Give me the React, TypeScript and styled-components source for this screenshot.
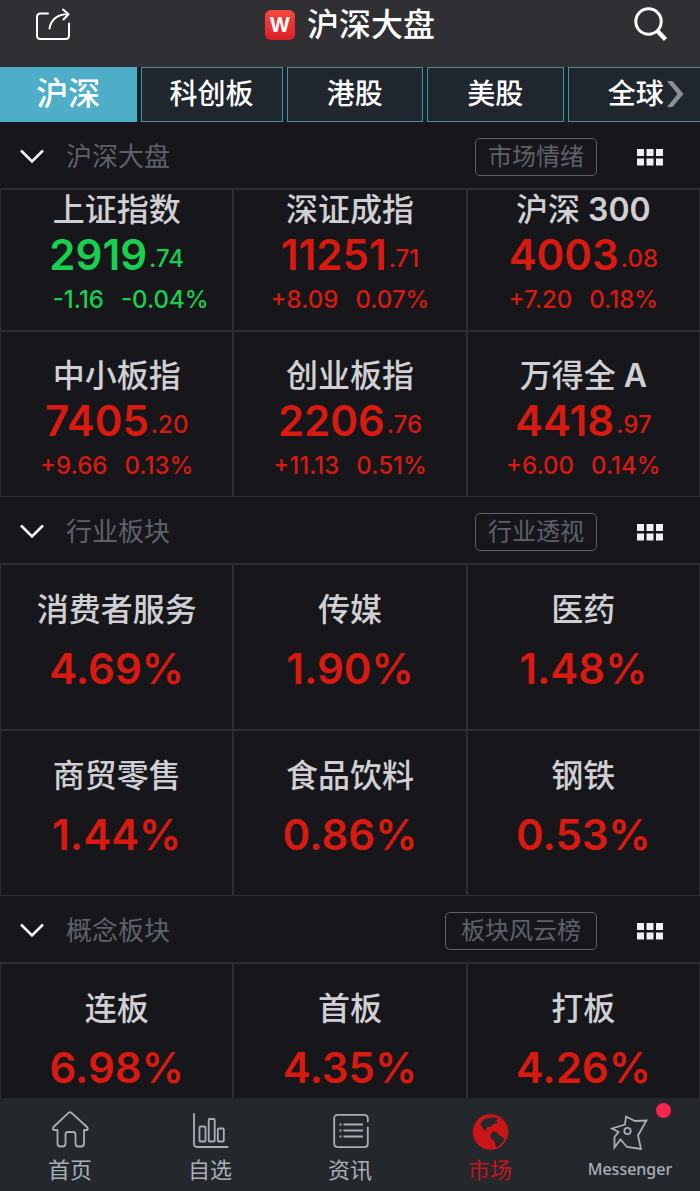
import React from 'react';
import styled, { createGlobalStyle } from 'styled-components';

const colors = {
  page: '#17171b',
  header: '#302f34',
  nav: '#24272c',
  tab: '#20262d',
  tabStrip: '#14222a',
  tabBorder: '#4f8d98',
  accent: '#4eaec8',
  line: '#2b2e33',
  muted: '#5d626a',
  name: '#d0d0d4',
  up: '#d81a10',
  down: '#18cf50',
  navText: '#a9afb9',
};

const GlobalStyle = createGlobalStyle`
  * { box-sizing: border-box; }
  body {
    margin: 0;
    background: ${colors.page};
    font-family: Inter, "Noto Sans CJK SC", sans-serif;
    color: #fff;
  }
  button { font: inherit; color: inherit; cursor: pointer; }
`;

const Shell = styled.div`
  display: flex;
  flex-direction: column;
  height: 100vh;
`;

const Header = styled.header`
  display: grid;
  grid-template-columns: 1fr auto 1fr;
  align-items: center;
  flex: none;
  height: 67px;
  padding: 0 32px 18px;
  background: ${colors.header};
`;

const IconButton = styled.button<{ $end?: boolean }>`
  display: flex;
  justify-self: ${(p) => (p.$end ? 'end' : 'start')};
  padding: 0;
  border: 0;
  background: none;
`;

const Title = styled.h1`
  display: flex;
  align-items: center;
  gap: 12px;
  margin: 0;
  font-size: 32px;
  line-height: 48px;
  font-weight: 500;
`;

const Logo = styled.span`
  display: flex;
  align-items: center;
  justify-content: center;
  width: 30px;
  height: 30px;
  border-radius: 6px;
  background: linear-gradient(#f5473c, #dc1f26);
  font: 700 20px/30px Inter, sans-serif;
`;

const TabStrip = styled.nav`
  position: relative;
  flex: none;
  overflow: hidden;
  background: ${colors.tabStrip};
`;

const TabList = styled.div`
  display: flex;
  gap: 4px;
`;

const Tab = styled.button<{ $active?: boolean }>`
  flex: 0 0 19.5%;
  min-width: fit-content;
  height: 55px;
  padding: 0 28px 2px;
  border: 1px solid ${(p) => (p.$active ? colors.accent : colors.tabBorder)};
  background: ${(p) => (p.$active ? colors.accent : colors.tab)};
  font-size: ${(p) => (p.$active ? 32 : 28)}px;
  font-weight: 500;
  line-height: 40px;
`;

const MoreTabs = styled.span`
  position: absolute;
  top: 13px;
  right: 16px;
  display: flex;
`;

const Content = styled.main`
  flex: 1;
  min-height: 0;
  overflow-y: auto;
  scrollbar-width: none;
`;

const SectionHeader = styled.div`
  display: flex;
  align-items: center;
  height: 66px;
  padding: 4px 37px 0 20px;
`;

const SectionTitle = styled.h2`
  flex: 1;
  margin: 0 0 0 22px;
  font-size: 26px;
  line-height: 36px;
  font-weight: 400;
  color: ${colors.muted};
`;

const LinkButton = styled.button<{ $wide?: boolean }>`
  height: 38px;
  margin-right: 40px;
  padding: 0 ${(p) => (p.$wide ? 15 : 12)}px;
  border: 1px solid ${colors.muted};
  border-radius: 5px;
  background: none;
  font-size: 24px;
  line-height: 32px;
  font-weight: 400;
  color: ${colors.muted};
`;

const Grid = styled.div`
  display: grid;
  grid-template-columns: repeat(3, 1fr);
  gap: 2px 2px;
  padding: 2px 1px 1px;
  background: ${colors.line};
`;

const Cell = styled.div<{ $cut?: boolean; $roomy?: boolean }>`
  display: flex;
  flex-direction: column;
  align-items: center;
  height: ${(p) => (p.$cut ? 140 : 164)}px;
  padding-top: ${(p) => (p.$cut ? 1 : p.$roomy ? 26 : 25)}px;
  background: ${colors.page};
`;

const Name = styled.div`
  font-size: 32px;
  line-height: 38px;
  font-weight: 500;
  color: ${colors.name};
`;

const Latin = styled.span`
  font-weight: 600;
`;

const Price = styled.div<{ $down?: boolean }>`
  display: flex;
  align-items: flex-end;
  gap: 2px;
  font-size: 42px;
  line-height: 52px;
  font-weight: 600;
  color: ${(p) => (p.$down ? colors.down : colors.up)};
`;

const Fraction = styled.span`
  font-size: 24px;
  line-height: 44px;
  font-weight: 500;
`;

const Change = styled.div<{ $down?: boolean }>`
  display: flex;
  gap: 17px;
  padding-left: ${(p) => (p.$down ? 28 : 0)}px;
  font-size: 24px;
  line-height: 38px;
  font-weight: 500;
  color: ${(p) => (p.$down ? colors.down : colors.up)};
`;

const Percent = styled.div`
  margin-top: 14px;
  font-size: 42px;
  line-height: 52px;
  font-weight: 600;
  color: ${colors.up};
`;

const BottomNav = styled.nav`
  display: grid;
  grid-template-columns: repeat(5, 1fr);
  flex: none;
  height: 93px;
  background: ${colors.nav};
`;

const NavLink = styled.a<{ $active?: boolean }>`
  position: relative;
  display: flex;
  flex-direction: column;
  align-items: center;
  gap: 3px;
  padding-top: 12px;
  color: ${(p) => (p.$active ? '#c4161a' : colors.navText)};
  text-decoration: none;
`;

const NavLabel = styled.span<{ $latin?: boolean }>`
  font-family: "Noto Sans", "Noto Sans CJK SC", sans-serif;
  font-size: ${(p) => (p.$latin ? 16 : 22)}px;
  line-height: 32px;
  font-weight: ${(p) => (p.$latin ? 500 : 400)};
`;

const Badge = styled.span`
  position: absolute;
  top: 5px;
  right: 29px;
  width: 15px;
  height: 15px;
  border-radius: 50%;
  background: #f9244f;
`;

const ShareIcon = () => (
  <svg width="42" height="34" viewBox="0 0 42 34" fill="none" stroke="#fff" strokeWidth="2" strokeLinecap="round" strokeLinejoin="round" aria-hidden="true">
    <path d="M16 5.500H8.500Q5 5.500 5 9V27.500Q5 31 8.500 31H33.500Q37 31 37 27.500V15.500" />
    <path d="M17.500 20.500C19 12 25 6.500 36 6M31 1.500L36.500 6.200L31.500 11.500" />
  </svg>
);

const SearchIcon = () => (
  <svg width="36" height="38" viewBox="0 0 36 38" fill="none" stroke="#fff" aria-hidden="true">
    <circle cx="16.500" cy="15.500" r="12.700" strokeWidth="3" />
    <path d="M25 24.500L33.500 33.500" strokeWidth="4.500" />
  </svg>
);

const ChevronDown = () => (
  <svg width="24" height="16" viewBox="0 0 24 16" fill="none" stroke="#f1f1f4" strokeWidth="2.600" aria-hidden="true">
    <path d="M1 1.500L12 12.500L23 1.500" />
  </svg>
);

const DotsIcon = () => (
  <svg width="26" height="17" viewBox="0 0 26 17" fill="#efeff4" aria-hidden="true">
    {[0, 9.500, 19].map((x) =>
      [0, 9.500].map((y) => <rect key={`${x}-${y}`} x={x} y={y} width="7" height="7" />),
    )}
  </svg>
);

const ArrowRight = () => (
  <svg width="18" height="28" viewBox="0 0 18 28" fill="#8b9097" aria-hidden="true">
    <path d="M1 1H6.500L17.500 14L6.500 27H1L11.500 14Z" />
  </svg>
);

const navSvg = {
  width: 40,
  height: 40,
  viewBox: '0 0 40 40',
  fill: 'none',
  stroke: 'currentColor',
  strokeWidth: 1.8,
  strokeLinejoin: 'round' as const,
  strokeLinecap: 'round' as const,
  'aria-hidden': true,
};

const HomeIcon = () => (
  <svg {...navSvg}>
    <path d="M18.500 2.800Q20 1.400 21.500 2.800L37 17Q38.800 20 36.500 20H34V33.500Q34 36.500 31 36.500H28.500Q25.500 36.500 25.500 33.500V24.500Q25.500 22 23 22H18Q15.500 22 15.500 24.500V33.500Q15.500 36.500 12.500 36.500H10.500Q7.500 36.500 7.500 33.500V20H4.500Q1.800 20 3.500 17Z" />
  </svg>
);

const ChartIcon = () => (
  <svg {...navSvg}>
    <path d="M4 4V34Q4 37 8 37H37.500" />
    <rect x="9.500" y="16.500" width="6" height="15" rx="1" />
    <rect x="18.700" y="9" width="6" height="22.500" rx="1" />
    <rect x="27.800" y="18.500" width="6" height="13" rx="1" />
  </svg>
);

const NewsIcon = () => (
  <svg {...navSvg}>
    <path d="M37.800 11.500V8.500Q37.800 4.800 34 4.800H8Q4.200 4.800 4.200 8.500V33.500Q4.200 37.200 8 37.200H34Q37.800 37.200 37.800 33.500V17.500" />
    <path d="M13.500 14.500H33M13.500 20.500H33M13.500 26.500H33" strokeWidth="2.200" strokeLinecap="butt" />
    <path d="M9.500 14.500H11.500M9.500 20.500H11.500M9.500 26.500H11.500" strokeWidth="2.200" strokeLinecap="butt" />
  </svg>
);

const GlobeIcon = () => (
  <svg width="40" height="40" viewBox="0 0 40 40" aria-hidden="true">
    <circle cx="20.500" cy="22" r="17.800" fill="#cb1619" />
    <path
      fill={colors.nav}
      d="M10.500 13L14 9.500L18 8L25.500 7.500L28 9L25.500 10.500L28 12.500L24 14L20 17L17.500 17L15.500 19.500L17 21.500L14 20L11.500 16.500Z"
    />
    <path
      fill={colors.nav}
      d="M20.500 24L23.500 21.500L27 22.500L29.500 25.500L34 28L34.500 30L31 34L26.500 37.500L25.500 36.500L25 32L21 28Z"
    />
  </svg>
);

const MessengerIcon = () => (
  <svg {...navSvg} strokeLinejoin="miter" strokeWidth={1.800}>
    <path d="M16 6.500L25 11L36.500 10.500L28 25.500L31 39L17 37L10.500 29.500L4.500 37.500V27L8.500 22L2 18.500L15 14.500Z" />
    <circle cx="17.500" cy="21" r="3.200" />
  </svg>
);

const tabs = ['沪深', '科创板', '港股', '美股', '全球'];

const indices = [
  { name: '上证指数', whole: '2919', fraction: '.74', change: '-1.16', percent: '-0.04%', down: true },
  { name: '深证成指', whole: '11251', fraction: '.71', change: '+8.09', percent: '0.07%' },
  { name: '沪深', latin: '300', whole: '4003', fraction: '.08', change: '+7.20', percent: '0.18%' },
  { name: '中小板指', whole: '7405', fraction: '.20', change: '+9.66', percent: '0.13%' },
  { name: '创业板指', whole: '2206', fraction: '.76', change: '+11.13', percent: '0.51%' },
  { name: '万得全', latin: 'A', whole: '4418', fraction: '.97', change: '+6.00', percent: '0.14%' },
];

const industries = [
  ['消费者服务', '4.69%'],
  ['传媒', '1.90%'],
  ['医药', '1.48%'],
  ['商贸零售', '1.44%'],
  ['食品饮料', '0.86%'],
  ['钢铁', '0.53%'],
];

const concepts = [
  ['连板', '6.98%'],
  ['首板', '4.35%'],
  ['打板', '4.26%'],
];

const navItems = [
  { label: '首页', Icon: HomeIcon },
  { label: '自选', Icon: ChartIcon },
  { label: '资讯', Icon: NewsIcon },
  { label: '市场', Icon: GlobeIcon, active: true },
  { label: 'Messenger', Icon: MessengerIcon, latin: true, badge: true },
];

function SectionBar({ title, link, wide }: { title: string; link: string; wide?: boolean }) {
  return (
    <SectionHeader>
      <IconButton aria-label={`收起${title}`}>
        <ChevronDown />
      </IconButton>
      <SectionTitle>{title}</SectionTitle>
      <LinkButton $wide={wide}>{link}</LinkButton>
      <IconButton aria-label="更多">
        <DotsIcon />
      </IconButton>
    </SectionHeader>
  );
}

function BoardGrid({ items }: { items: string[][] }) {
  return (
    <Grid>
      {items.map(([name, percent]) => (
        <Cell key={name} $roomy>
          <Name>{name}</Name>
          <Percent>{percent}</Percent>
        </Cell>
      ))}
    </Grid>
  );
}

export default function App() {
  return (
    <>
      <GlobalStyle />
      <Shell>
        <Header>
          <IconButton aria-label="分享">
            <ShareIcon />
          </IconButton>
          <Title>
            <Logo>W</Logo>
            沪深大盘
          </Title>
          <IconButton $end aria-label="搜索">
            <SearchIcon />
          </IconButton>
        </Header>
        <TabStrip>
          <TabList>
            {tabs.map((tab, i) => (
              <Tab key={tab} $active={i === 0}>
                {tab}
              </Tab>
            ))}
          </TabList>
          <MoreTabs>
            <ArrowRight />
          </MoreTabs>
        </TabStrip>
        <Content>
          <SectionBar title="沪深大盘" link="市场情绪" />
          <Grid>
            {indices.map((item, i) => (
              <Cell key={item.name} $cut={i < 3}>
                <Name>
                  {item.name}
                  {item.latin && <Latin> {item.latin}</Latin>}
                </Name>
                <Price $down={item.down}>
                  {item.whole}
                  <Fraction>{item.fraction}</Fraction>
                </Price>
                <Change $down={item.down}>
                  <span>{item.change}</span>
                  <span>{item.percent}</span>
                </Change>
              </Cell>
            ))}
          </Grid>
          <SectionBar title="行业板块" link="行业透视" />
          <BoardGrid items={industries} />
          <SectionBar title="概念板块" link="板块风云榜" wide />
          <BoardGrid items={concepts} />
        </Content>
        <BottomNav>
          {navItems.map(({ label, Icon, active, latin, badge }) => (
            <NavLink key={label} href="#" $active={active}>
              <Icon />
              <NavLabel $latin={latin}>{label}</NavLabel>
              {badge && <Badge />}
            </NavLink>
          ))}
        </BottomNav>
      </Shell>
    </>
  );
}
